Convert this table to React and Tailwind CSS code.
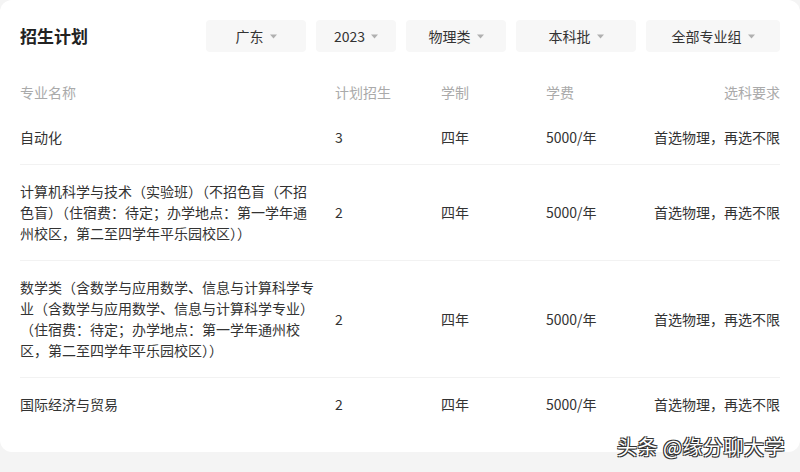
const filters = [
  { label: "广东", w: "w-[100px]" },
  { label: "2023", w: "w-[80px]" },
  { label: "物理类", w: "w-[100px]" },
  { label: "本科批", w: "w-[120px]" },
  { label: "全部专业组", w: "w-[134px]" },
];

const rows = [
  { name: "自动化", plan: "3" },
  {
    name: "计算机科学与技术（实验班）（不招色盲（不招色盲）（住宿费：待定；办学地点：第一学年通州校区，第二至四学年平乐园校区））",
    plan: "2",
  },
  {
    name: "数学类（含数学与应用数学、信息与计算科学专业（含数学与应用数学、信息与计算科学专业）（住宿费：待定；办学地点：第一学年通州校区，第二至四学年平乐园校区））",
    plan: "2",
  },
  { name: "国际经济与贸易", plan: "2" },
];

function Caret() {
  return (
    <svg width="7" height="5" viewBox="0 0 7 5" className="ml-[6px]">
      <path d="M0 0.5h7L3.5 4.5z" fill="#b0b0b0" />
    </svg>
  );
}

export default function App() {
  return (
    <div
      className="relative w-[800px] h-[472px] bg-[#f4f4f4] overflow-hidden"
      style={{ fontFamily: '"Noto Sans CJK SC", "Noto Sans", sans-serif' }}
    >
      <div className="w-[800px] h-[452px] bg-white rounded-[12px] px-5 pt-5">
        <div className="flex items-center h-8">
          <h2 className="text-[17px] font-bold text-[#222] leading-8 flex-1">招生计划</h2>
          <div className="flex gap-[10px]">
            {filters.map((f) => (
              <div
                key={f.label}
                className={`${f.w} h-8 bg-[#f7f7f7] rounded flex items-center justify-center text-[14px] text-[#333]`}
              >
                {f.label}
                <Caret />
              </div>
            ))}
          </div>
        </div>

        <div className="flex items-center pt-[30px] pb-2 text-[14px] leading-[21px] text-[#aaa]">
          <div className="w-[315px]">专业名称</div>
          <div className="w-[106px]">计划招生</div>
          <div className="w-[105px]">学制</div>
          <div className="flex-1">学费</div>
          <div>选科要求</div>
        </div>

        {rows.map((r, i) => (
          <div
            key={i}
            className={`flex items-center py-4 text-[14px] leading-[21px] text-[#333] ${
              i > 0 ? "border-t border-[#f2f2f2]" : ""
            }`}
          >
            <div className="w-[300px] mr-[15px]">{r.name}</div>
            <div className="w-[106px]">{r.plan}</div>
            <div className="w-[105px]">四年</div>
            <div className="flex-1">5000/年</div>
            <div>首选物理，再选不限</div>
          </div>
        ))}
      </div>

      <div
        className="absolute left-[617px] top-[432px] text-[20px] leading-[30px] text-white tracking-[0.5px]"
        style={{
          textShadow:
            "1px 1px 0 #333, -1px -1px 0 #333, 1px -1px 0 #333, -1px 1px 0 #333",
        }}
      >
        头条 @缘分聊大学
      </div>
    </div>
  );
}
